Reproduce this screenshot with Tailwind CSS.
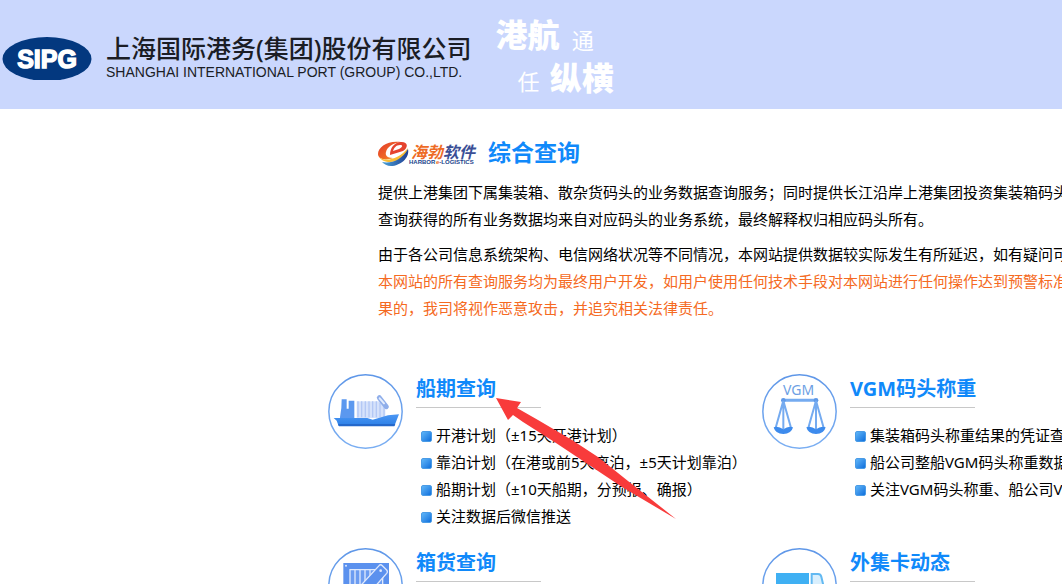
<!DOCTYPE html>
<html lang="zh-CN">
<head>
  <meta charset="UTF-8">
  <meta name="viewport" content="width=device-width, initial-scale=1.0">
  <title>综合查询</title>
  <script src="https://cdn.jsdelivr.net/npm/@tailwindcss/browser@4"></script>
</head>
<body class="relative h-screen overflow-hidden bg-white font-['Noto_Sans','Noto_Sans_CJK_SC',sans-serif] text-[15px] leading-[27px] text-black">
  <header class="flex h-[109px] items-start bg-[#cad7fd] whitespace-nowrap">
    <a href="#" class="flex items-center gap-[14px] pt-[33px] pl-[2px]">
      <svg class="h-[46px] w-[90px]" viewBox="0 0 90 46" role="img" aria-label="SIPG">
        <ellipse cx="45" cy="25" rx="44.500" ry="22" fill="#03387f"/>
        <text x="45" y="34" text-anchor="middle" font-family="Liberation Sans" font-weight="bold" font-size="25" fill="#fff" stroke="#fff" stroke-width="1.400">SIPG</text>
      </svg>
      <span class="flex flex-col text-[#1b1d25]">
        <span class="text-[25px] leading-[30px] font-medium">上海国际港务(集团)股份有限公司</span>
        <span class="font-['Liberation_Sans',sans-serif] text-[14px] leading-[18px]">SHANGHAI INTERNATIONAL PORT (GROUP) CO.,LTD.</span>
      </span>
    </a>
    <div class="flex flex-col pt-[13px] pl-[24px] text-[22px] leading-[43px] text-white">
      <p class="flex items-end gap-[12px]"><b class="text-[32px] font-black">港航</b><span class="leading-[32px]">通</span></p>
      <p class="flex items-baseline gap-[10px] pl-[22px]"><span>任</span><b class="text-[32px] font-black">纵横</b></p>
    </div>
  </header>

  <main class="pl-[328px] whitespace-nowrap">
    <section class="pt-[26px] pl-[50px]">
      <h1 class="flex items-center gap-[11px] text-[23px] leading-[34px] font-bold text-[#1089fa]">
        <svg class="h-[28px] w-[99px]" viewBox="0 0 99 28" role="img" aria-label="海勃软件">
          <defs>
            <linearGradient id="warm" x1="0" y1="0" x2="1" y2="1">
              <stop offset="0" stop-color="#e2372b"/>
              <stop offset=".6" stop-color="#f06a26"/>
              <stop offset="1" stop-color="#fbc53c"/>
            </linearGradient>
            <linearGradient id="cool" x1="0" y1="0" x2="1" y2="0">
              <stop offset="0" stop-color="#4ba3d8"/>
              <stop offset="1" stop-color="#1f3f93"/>
            </linearGradient>
          </defs>
          <path d="M23 4C10 2 0 9 0 16C0 21 7 23 15 20C9 20 7 17 8 14C9 9 15 5 23 4Z" fill="url(#warm)"/>
          <path d="M22 4C30 3 31 9 25 13L12 17C12 10 16 5 22 4ZM22 7C18 7 16 10 15 13L21 11C25 9 25 7 22 7Z" fill="#e5432e"/>
          <path d="M1 19C7 24 20 22 30 10C28 19 20 24 12 24C7 24 3 22 1 19Z" fill="#f9bd35"/>
          <path d="M4 24C13 26 24 22 30 11C32 20 22 28 13 28C9 28 6 26 4 24Z" fill="url(#cool)"/>
          <g font-family="Noto Sans CJK SC" font-weight="bold" font-style="italic" font-size="16">
            <text x="33" y="20" fill="#ee6b25">海勃</text>
            <text x="65" y="20" fill="#3b4f96">软件</text>
          </g>
          <g font-family="Liberation Sans" font-weight="bold" font-size="6" fill="#203f8c">
            <text x="31" y="26">HARBOR</text>
            <text x="58" y="26"><tspan fill="#ee6b25">e</tspan>-LOGISTICS</text>
          </g>
        </svg>
        综合查询
      </h1>
      <p class="mt-[10px]">提供上港集团下属集装箱、散杂货码头的业务数据查询服务；同时提供长江沿岸上港集团投资集装箱码头<br>查询获得的所有业务数据均来自对应码头的业务系统，最终解释权归相应码头所有。</p>
      <p class="mt-[8px]">由于各公司信息系统架构、电信网络状况等不同情况，本网站提供数据较实际发生有所延迟，如有疑问可<br><span class="text-[#f56a22]">本网站的所有查询服务均为最终用户开发，如用户使用任何技术手段对本网站进行任何操作达到预警标准<br>果的，我司将视作恶意攻击，并追究相关法律责任。</span></p>
    </section>

    <div class="mt-[52px] grid grid-cols-[434px_434px] gap-y-[18px]">
      <section class="flex items-start gap-[13px]">
        <svg class="size-[75px] shrink-0" viewBox="0 0 225 225" fill="none">
          <defs>
            <linearGradient id="ring" x1="0" y1="0" x2="0" y2="1">
              <stop offset="0" stop-color="#5f97e8"/>
              <stop offset="1" stop-color="#7aaef2"/>
            </linearGradient>
            <linearGradient id="hull" x1="0" y1="0" x2="0" y2="1">
              <stop offset="0" stop-color="#4c97f4"/>
              <stop offset="1" stop-color="#2b7fe6"/>
            </linearGradient>
          </defs>
          <circle cx="112.500" cy="112.500" r="110" stroke="url(#ring)" stroke-width="4.500"/>
          <path d="M86 82H172V132H86Z" fill="#d6e2fb"/>
          <path d="M90 82V130M101 82V130M112 82V130M123 82V130M134 82V130M145 82V130M156 86V130M168 96V130" stroke="#b3c8f5" stroke-width="4"/>
          <path d="M154 71L175 98" stroke="#8faeea" stroke-width="15" stroke-linecap="round"/>
          <path d="M155 73L168 88" stroke="#e4edfd" stroke-width="6" stroke-linecap="round"/>
          <path d="M41 76H56V104H62V80H79V133H36V130L40 102Z" fill="#5b98ef"/>
          <path d="M17 132H118L134 137L180 124L213 121L199 156H32L26 140Z" fill="url(#hull)"/>
          <path d="M30 150H202L199 157H33Z" fill="#2468cb"/>
        </svg>
        <div>
          <h2 class="text-[20px] leading-[30px] font-bold text-[#1089fa]"><a href="#">船期查询</a></h2>
          <div class="mt-[3px] w-[125px] border-b border-[#c8c8c8]"></div>
          <ul class="mt-[14px] pl-[5px]">
            <li class="flex items-center gap-[4px]"><i class="mt-[2px] size-[11px] rounded-[2px] border border-[#4a9be6] bg-linear-to-br from-[#5fb6f8] to-[#0a6fdc]"></i><a href="#">开港计划（±15天开港计划）</a></li>
            <li class="flex items-center gap-[4px]"><i class="mt-[2px] size-[11px] rounded-[2px] border border-[#4a9be6] bg-linear-to-br from-[#5fb6f8] to-[#0a6fdc]"></i><a href="#">靠泊计划（在港或前5天离泊，±5天计划靠泊）</a></li>
            <li class="flex items-center gap-[4px]"><i class="mt-[2px] size-[11px] rounded-[2px] border border-[#4a9be6] bg-linear-to-br from-[#5fb6f8] to-[#0a6fdc]"></i><a href="#">船期计划（±10天船期，分预报、确报）</a></li>
            <li class="flex items-center gap-[4px]"><i class="mt-[2px] size-[11px] rounded-[2px] border border-[#4a9be6] bg-linear-to-br from-[#5fb6f8] to-[#0a6fdc]"></i><a href="#">关注数据后微信推送</a></li>
          </ul>
        </div>
      </section>

      <section class="flex items-start gap-[13px]">
        <svg class="size-[75px] shrink-0" viewBox="0 0 225 225" fill="none">
          <circle cx="112.500" cy="112.500" r="110" stroke="url(#ring)" stroke-width="4.500"/>
          <text x="110" y="63" text-anchor="middle" font-family="Noto Sans" font-size="42" fill="#6d9fe4">VGM</text>
          <path d="M62 79H164" stroke="#75abf0" stroke-width="9"/>
          <circle cx="64" cy="79" r="7" fill="#5d98e8"/>
          <circle cx="162" cy="79" r="7" fill="#5d98e8"/>
          <path d="M64 80L40 165M64 80L88 165M64 80V165M162 80L138 165M162 80L186 165M162 80V165" stroke="#75abf0" stroke-width="6"/>
          <path d="M35 160Q48 154 64 166Q80 154 93 160Q88 180 64 180Q40 180 35 160ZM133 160Q146 154 162 166Q178 154 191 160Q186 180 162 180Q138 180 133 160Z" fill="#3d8bed"/>
        </svg>
        <div>
          <h2 class="text-[20px] leading-[30px] font-bold text-[#1089fa]"><a href="#">VGM码头称重</a></h2>
          <div class="mt-[3px] w-[125px] border-b border-[#c8c8c8]"></div>
          <ul class="mt-[14px] pl-[5px]">
            <li class="flex items-center gap-[4px]"><i class="mt-[2px] size-[11px] rounded-[2px] border border-[#4a9be6] bg-linear-to-br from-[#5fb6f8] to-[#0a6fdc]"></i><a href="#">集装箱码头称重结果的凭证查</a></li>
            <li class="flex items-center gap-[4px]"><i class="mt-[2px] size-[11px] rounded-[2px] border border-[#4a9be6] bg-linear-to-br from-[#5fb6f8] to-[#0a6fdc]"></i><a href="#">船公司整船VGM码头称重数据</a></li>
            <li class="flex items-center gap-[4px]"><i class="mt-[2px] size-[11px] rounded-[2px] border border-[#4a9be6] bg-linear-to-br from-[#5fb6f8] to-[#0a6fdc]"></i><a href="#">关注VGM码头称重、船公司V</a></li>
          </ul>
        </div>
      </section>

      <section class="flex items-start gap-[13px]">
        <svg class="size-[75px] shrink-0" viewBox="0 0 225 225" fill="none">
          <circle cx="112.500" cy="112.500" r="110" stroke="url(#ring)" stroke-width="4.500"/>
          <path d="M46 45H183V180H46Z" fill="#5b91ee"/>
          <path d="M66 65H164V160H66Z" fill="#6c9cf1"/>
          <path d="M66 65H164V160H66ZM81 65V160M96 65V160M111 65V160M126 65V160" stroke="#dfe9fd" stroke-width="4"/>
          <path d="M62 152L154 52Q158 48 163 53L176 66Q180 71 176 76L88 176Z" fill="#5b91ee" stroke="#dfe9fd" stroke-width="4" stroke-linejoin="round"/>
          <circle cx="54" cy="53" r="3" fill="#dfe9fd"/>
          <circle cx="158" cy="68" r="4" fill="#dfe9fd"/>
        </svg>
        <div>
          <h2 class="text-[20px] leading-[30px] font-bold text-[#1089fa]"><a href="#">箱货查询</a></h2>
          <div class="mt-[3px] w-[125px] border-b border-[#c8c8c8]"></div>
        </div>
      </section>

      <section class="flex items-start gap-[13px]">
        <svg class="size-[75px] shrink-0" viewBox="0 0 225 225" fill="none">
          <circle cx="112.500" cy="112.500" r="110" stroke="url(#ring)" stroke-width="4.500"/>
          <path d="M42 75H141V150H42Z" fill="#3fb0f3"/>
          <path d="M149 78H168Q176 78 178 86L184 112V150H149Z" fill="#d9effd" stroke="#62b9f2" stroke-width="6"/>
          <circle cx="72" cy="155" r="14" fill="#3fb0f3"/>
          <circle cx="158" cy="155" r="14" fill="#3fb0f3"/>
        </svg>
        <div>
          <h2 class="text-[20px] leading-[30px] font-bold text-[#1089fa]"><a href="#">外集卡动态</a></h2>
          <div class="mt-[3px] w-[125px] border-b border-[#c8c8c8]"></div>
        </div>
      </section>
    </div>
  </main>

  <!-- pointer to the schedule query -->
  <svg class="pointer-events-none absolute top-[398px] left-[496px] h-[121px] w-[180px]" viewBox="0 0 180 121" aria-hidden="true">
    <path d="M0 0L25 4L21 10L42 22L76 42L102 59L132 83L180 121L126 89L93 67L60 45L27 24L17 17L12 22Z" fill="#f83b3b"/>
  </svg>
</body>
</html>
